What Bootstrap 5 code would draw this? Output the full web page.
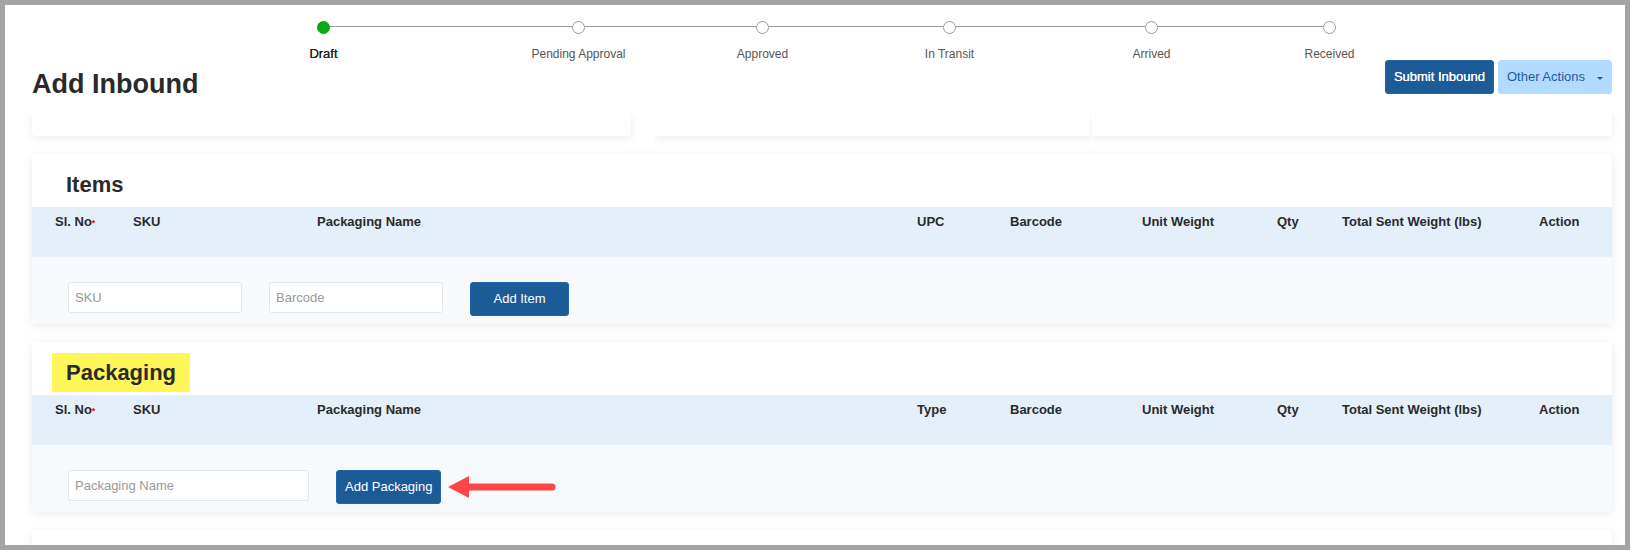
<!DOCTYPE html>
<html lang="en">
<head>
<meta charset="utf-8">
<meta name="viewport" content="width=device-width, initial-scale=1">
<title>Add Inbound</title>
<link rel="stylesheet" href="https://cdn.jsdelivr.net/npm/bootstrap@5.3.0/dist/css/bootstrap.min.css">
<style>
  body { font-family: "Liberation Sans", Arial, sans-serif; font-size: 13px; line-height: 18px; color: #2a2a2a; }
  .app-frame { height: 100vh; border: 5px solid #a4a4a4; background: #fefefe; }
  .page-head { height: 108px; padding: 16px 13px 0 27px; }

  /* progress steps */
  .stepper { display: grid; grid-template-columns: 327fr 183fr 185fr 189fr 215fr 141fr; height: 39px; margin: 0 212px 0 128px; font-size: 12px; color: #555; }
  .stepper .rule { flex: 1; height: 1px; margin-top: 5px; background: #999; }
  .stepper .rule.off { background: none; }
  .stepper .dot { width: 13px; height: 13px; border: 1px solid #999; border-radius: 50%; background: #fff; }
  .stepper .done .dot { background: #04a913; border-color: #04a913; }
  .stepper .done { color: #222; font-size: 13px; }
  .stepper .step-name { margin-top: 11px; white-space: nowrap; }

  .page-title { font-size: 27px; line-height: 32px; font-weight: 700; margin: 8px 0 0; }
  .medium { text-shadow: 0 0 0 currentColor; }
  .btn { font-size: 13px; line-height: 18px; padding: 7px 8px; height: 34px; border-radius: 3px; }
  .page-head .btn { padding-top: 6px; }
  .btn-main { --bs-btn-color: #fff; --bs-btn-bg: #1c5b98; --bs-btn-border-color: #2265a3; --bs-btn-hover-color: #fff; --bs-btn-hover-bg: #174d82; }
  .btn-soft { --bs-btn-color: #1c5b98; --bs-btn-bg: #b3daff; --bs-btn-border-color: #b3daff; --bs-btn-hover-bg: #9fcfff; }
  .btn-soft::after { margin-left: 12px; border-width: 3px 3px 0; vertical-align: 1px; }
  .btn-wide { width: 99px; }

  .scroll-area { padding: 0 13px 0 27px; }
  .panel { background: #fff; border-radius: 4px; box-shadow: 0 2px 9px rgba(0, 0, 0, .08); }
  .top-panels { gap: 24px; margin-bottom: 18px; }
  .top-panels .panel { height: 23px; border-top-left-radius: 0; border-top-right-radius: 0; }
  .details-a { flex: 599; }
  .details-pair { flex: 957; gap: 1px; }
  .details-b { flex: 435; border-radius: 0; clip-path: inset(0 0 -12px 0); }
  .details-c { flex: 521; }

  .section-panel { margin-bottom: 18px; }
  .section-head { height: 53px; padding: 11px 20px 0; }
  .section-title { font-size: 22px; line-height: 39px; font-weight: 700; padding: 0 14px; margin: 0; }
  .section-title.marked { background: #fff659; }
  .lines { table-layout: fixed; width: 100%; }
  .lines th { height: 50px; padding: 6px 0 0; vertical-align: top; background: #e5effa; font-weight: 700; color: #2a2a2a; white-space: nowrap; }
  .lines th:first-child { padding-left: 23px; }
  .lines .req { color: #f00; font-size: 9px; }
  .entry { background: #f6fafd; padding: 25px 36px 8px; gap: 27px; border-radius: 0 0 4px 4px; }
  .entry .form-control { width: 174px; height: 31px; padding: 4px 6px; font-size: 13px; line-height: 18px; border: 1px solid #e2e4e6; border-radius: 3px; }
  .entry .form-control.wide { width: 241px; }
  .entry .form-control::placeholder { color: #999; }
  .pointer { margin: 6px 0 0 -20px; }
</style>
</head>
<body>
<div class="app-frame d-flex flex-column overflow-hidden">
  <header class="page-head bg-white flex-shrink-0">
    <div class="stepper text-center">
      <div class="done"><div class="d-flex align-items-start"><span class="rule off"></span><span class="dot"></span><span class="rule"></span></div><div class="step-name medium">Draft</div></div>
      <div><div class="d-flex align-items-start"><span class="rule"></span><span class="dot"></span><span class="rule"></span></div><div class="step-name">Pending Approval</div></div>
      <div><div class="d-flex align-items-start"><span class="rule"></span><span class="dot"></span><span class="rule"></span></div><div class="step-name">Approved</div></div>
      <div><div class="d-flex align-items-start"><span class="rule"></span><span class="dot"></span><span class="rule"></span></div><div class="step-name">In Transit</div></div>
      <div><div class="d-flex align-items-start"><span class="rule"></span><span class="dot"></span><span class="rule"></span></div><div class="step-name">Arrived</div></div>
      <div><div class="d-flex align-items-start"><span class="rule"></span><span class="dot"></span><span class="rule off"></span></div><div class="step-name">Received</div></div>
    </div>
    <div class="d-flex justify-content-between align-items-start">
      <h1 class="page-title">Add Inbound</h1>
      <div class="d-flex gap-1">
        <button type="button" class="btn btn-main medium">Submit Inbound</button>
        <button type="button" class="btn btn-soft dropdown-toggle" data-bs-toggle="dropdown" aria-expanded="false">Other Actions</button>
      </div>
    </div>
  </header>

  <main class="scroll-area flex-fill overflow-hidden">
    <div class="top-panels d-flex">
      <div class="panel details-a"></div>
      <div class="details-pair d-flex">
        <div class="panel details-b"></div>
        <div class="panel details-c"></div>
      </div>
    </div>

    <section class="panel section-panel">
      <div class="section-head d-flex align-items-start"><h2 class="section-title">Items</h2></div>
      <table class="lines">
        <colgroup><col style="width:101px"><col style="width:184px"><col><col style="width:93px"><col style="width:132px"><col style="width:135px"><col style="width:65px"><col style="width:197px"><col style="width:73px"></colgroup>
        <thead><tr><th>Sl. No<span class="req">*</span></th><th>SKU</th><th>Packaging Name</th><th>UPC</th><th>Barcode</th><th>Unit Weight</th><th>Qty</th><th>Total Sent Weight (lbs)</th><th>Action</th></tr></thead>
      </table>
      <form class="entry d-flex align-items-start">
        <input type="text" class="form-control" placeholder="SKU" aria-label="SKU">
        <input type="text" class="form-control" placeholder="Barcode" aria-label="Barcode">
        <button type="button" class="btn btn-main btn-wide">Add Item</button>
      </form>
    </section>

    <section class="panel section-panel">
      <div class="section-head d-flex align-items-start"><h2 class="section-title marked">Packaging</h2></div>
      <table class="lines">
        <colgroup><col style="width:101px"><col style="width:184px"><col><col style="width:93px"><col style="width:132px"><col style="width:135px"><col style="width:65px"><col style="width:197px"><col style="width:73px"></colgroup>
        <thead><tr><th>Sl. No<span class="req">*</span></th><th>SKU</th><th>Packaging Name</th><th>Type</th><th>Barcode</th><th>Unit Weight</th><th>Qty</th><th>Total Sent Weight (lbs)</th><th>Action</th></tr></thead>
      </table>
      <form class="entry d-flex align-items-start">
        <input type="text" class="form-control wide" placeholder="Packaging Name" aria-label="Packaging Name">
        <button type="button" class="btn btn-main">Add Packaging</button>
        <svg class="pointer" width="108" height="22" viewBox="0 0 108 22" aria-hidden="true"><path d="M0 11 21 0V22Z" fill="#ff4545"/><path d="M20 11H104" stroke="#ff4545" stroke-width="7" stroke-linecap="round"/></svg>
      </form>
    </section>

    <section class="panel section-panel"><div class="section-head"></div></section>
  </main>
</div>
<script src="https://cdn.jsdelivr.net/npm/bootstrap@5.3.0/dist/js/bootstrap.bundle.min.js"></script>
</body>
</html>
